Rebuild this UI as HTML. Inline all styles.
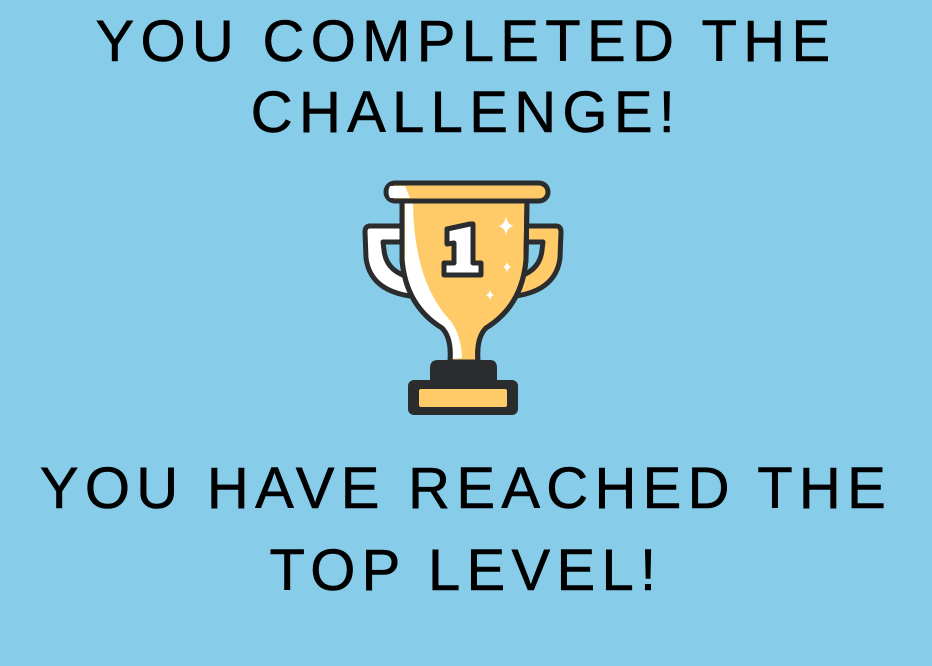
<!DOCTYPE html>
<html><head><meta charset="utf-8"><style>
html,body{margin:0;padding:0;background:#87CDEA;width:932px;height:666px;overflow:hidden}
svg{display:block}
text{font-family:"Liberation Sans",sans-serif;font-size:58px;letter-spacing:6.3px;fill:#000;stroke:#000;stroke-width:0.6px}
</style></head><body>
<svg width="932" height="666" viewBox="0 0 932 666">
<rect width="932" height="666" fill="#87CDEA"/>
<text x="466" y="61" text-anchor="middle">YOU COMPLETED THE</text>
<text x="466" y="132" text-anchor="middle">CHALLENGE!</text>
<text x="466" y="508" text-anchor="middle">YOU HAVE REACHED THE</text>
<text x="466" y="590" text-anchor="middle">TOP LEVEL!</text>
<g stroke="#2a2c2e" stroke-width="5" stroke-linejoin="round">
<path d="M404 226 L370 226 Q365 226 365 232 L366 258 Q370 290 410 296 L412 278 Q386 272 384 250 L383 242 L404 242 Z" fill="#fff"/>
<path d="M524 226 L556 226 Q561 226 561 232 L560 258 Q556 290 516 296 L514 278 Q540 272 542 250 L543 242 L522 242 Z" fill="#FFCA68"/>
<path d="M402 200 L527 200 L526 260 Q522 306 486 328 Q476 338 478 362 L450 362 Q452 338 442 328 Q406 306 402 260 Z" fill="#FFCA68"/>
</g>
<path d="M405 203 L413 203 Q414 280 448 318 Q461 332 462 358 L452 359 Q453 336 443 326 Q408 304 405 260 Z" fill="#fff"/>
<path d="M402 200 L527 200 L526 260 Q522 306 486 328 Q476 338 478 362 L450 362 Q452 338 442 328 Q406 306 402 260 Z" fill="none" stroke="#2a2c2e" stroke-width="5" stroke-linejoin="round"/>
<rect x="386" y="183" width="162" height="18" rx="9" fill="#FFCA68" stroke="#2a2c2e" stroke-width="5"/>
<path d="M390 186 L405 186 L410 198 L390 198 Q387 192 390 186Z" fill="#fff"/>
<path d="M430 380 L430 368 Q430 360 438 360 L490 360 Q497 360 497 368 L497 380 Z" fill="#2a2c2e"/>
<rect x="408" y="380" width="110" height="35" rx="6" fill="#2a2c2e"/>
<rect x="419" y="389" width="88" height="18" rx="2" fill="#FFCA68"/>
<path d="M447 229 L470 224 L473 224 L473 263 L481 263 L481 275 L444 275 L444 263 L454 263 L454 243 L447 244 Z" fill="#fff" stroke="#2a2c2e" stroke-width="5" stroke-linejoin="round"/>
<g fill="#fff">
<path d="M506 216 Q507 225 514 226 Q507 227 506 236 Q505 227 498 226 Q505 225 506 216Z"/>
<path d="M507 262 Q508 266 511 267 Q508 268 507 272 Q506 268 503 267 Q506 266 507 262Z"/>
<path d="M490 290 Q491 294 494 295 Q491 296 490 300 Q489 296 486 295 Q489 294 490 290Z"/>
</g>
</svg>
</body></html>
